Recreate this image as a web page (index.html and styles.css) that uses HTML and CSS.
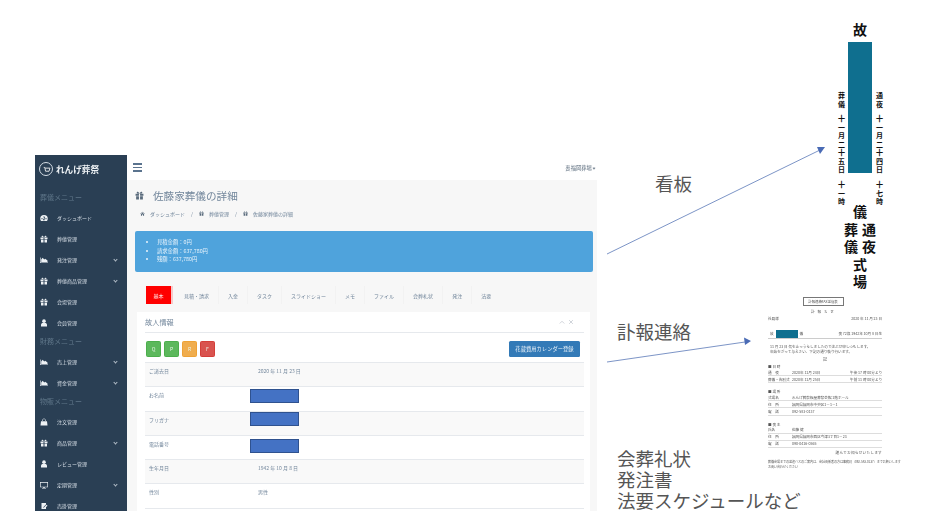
FILE: index.html
```html
<!DOCTYPE html>
<html lang="ja">
<head>
<meta charset="utf-8">
<title>れんげ葬祭</title>
<link rel="stylesheet" href="styles.css">
</head>
<body>
<svg class="sprites" width="0" height="0" aria-hidden="true">
  <symbol id="i-gift" viewBox="0 0 16 16"><path d="M1 5h6v3.500H1zM9 5h6v3.500H9zM2 9.500h5V15H2zM9 9.500h5V15H9zM8 4.600C6.400 1 3.200.3 3 2.600c-.1 1.600 2.500 2 5 2zm0 0C9.600 1 12.800.3 13 2.600c.1 1.600-2.500 2-5 2z"/></symbol>
  <symbol id="i-dash" viewBox="0 0 16 16"><path fill-rule="evenodd" d="M8 2a7.500 7.500 0 0 0-7.500 7.500c0 1.700.6 3.300 1.600 4.500h11.800a7.400 7.400 0 0 0 1.600-4.500A7.500 7.500 0 0 0 8 2zM4 10.500a1.200 1.200 0 1 1 0-2.400 1.200 1.200 0 0 1 0 2.400zm4-3.500a1.200 1.200 0 1 1 0-2.400A1.200 1.200 0 0 1 8 7zm0 6a1.800 1.800 0 0 1-.6-3.500l2-3.700 1 .5-1.600 3.600A1.800 1.800 0 0 1 8 13zm4-2.500a1.200 1.200 0 1 1 0-2.400 1.200 1.200 0 0 1 0 2.400z"/></symbol>
  <symbol id="i-chart" viewBox="0 0 16 16"><path d="M0 3h1.200v10H16v1.200H0zM2.400 12V7l3-3.500 3 3.500 2-1.500L15 9v3z"/></symbol>
  <symbol id="i-user" viewBox="0 0 16 16"><circle cx="8" cy="4.300" r="3.600"/><path d="M2 15v-3.500C2 9 4 8 5.500 8h5C12 8 14 9 14 11.500V15z"/></symbol>
  <symbol id="i-bag" viewBox="0 0 16 16"><path d="M2 6.500h12l1 8.500H1zM4.800 6V4a3.200 3.200 0 0 1 6.400 0v2H10V4a2 2 0 0 0-4 0v2z"/></symbol>
  <symbol id="i-desktop" viewBox="0 0 16 16"><path fill-rule="evenodd" d="M0 2h16v10.500H9.500V14H12v1H4v-1h2.500v-1.500H0zM1.300 3.300v8h13.400v-8z"/></symbol>
  <symbol id="i-edit" viewBox="0 0 16 16"><path d="M3 2h9v3L7 10v2h2l3-3v5H3zM13 5.500l2 2L9 13H7.500v-1.500z"/></symbol>
  <symbol id="i-home" viewBox="0 0 16 16"><path d="M8 2 .5 8.500l1 1L8 4l6.500 5.500 1-1zM3 10v5h3.500v-3.500h3V15H13v-5L8 5.700z"/></symbol>
</svg>

<main class="canvas">
  <section class="app">
    <nav class="sidebar">
      <div class="brand">
        <span class="brand-mark"><svg viewBox="0 0 16 16"><path d="M4 5h1.500l1.200 5.500h5L13 6H6M7 12.500h.1M11 12.500h.1" fill="none" stroke="currentColor" stroke-width="1.200"/></svg></span>
        <span class="brand-name">れんげ葬祭</span>
      </div>
      <div class="side-head">葬儀メニュー</div>
      <a class="side-item"><svg class="side-icon"><use href="#i-dash"/></svg><span>ダッシュボード</span></a>
      <a class="side-item"><svg class="side-icon"><use href="#i-gift"/></svg><span>葬儀管理</span></a>
      <a class="side-item"><svg class="side-icon"><use href="#i-chart"/></svg><span>発注管理</span><i class="chev"></i></a>
      <a class="side-item"><svg class="side-icon"><use href="#i-gift"/></svg><span>葬儀商品管理</span><i class="chev"></i></a>
      <a class="side-item"><svg class="side-icon"><use href="#i-gift"/></svg><span>会場管理</span></a>
      <a class="side-item"><svg class="side-icon"><use href="#i-user"/></svg><span>会員管理</span></a>
      <div class="side-head">財務メニュー</div>
      <a class="side-item"><svg class="side-icon"><use href="#i-chart"/></svg><span>売上管理</span><i class="chev"></i></a>
      <a class="side-item"><svg class="side-icon"><use href="#i-chart"/></svg><span>資金管理</span><i class="chev"></i></a>
      <div class="side-head">物販メニュー</div>
      <a class="side-item"><svg class="side-icon"><use href="#i-bag"/></svg><span>注文管理</span></a>
      <a class="side-item"><svg class="side-icon"><use href="#i-gift"/></svg><span>商品管理</span><i class="chev"></i></a>
      <a class="side-item"><svg class="side-icon"><use href="#i-user"/></svg><span>レビュー管理</span></a>
      <a class="side-item"><svg class="side-icon"><use href="#i-desktop"/></svg><span>定期管理</span><i class="chev"></i></a>
      <a class="side-item"><svg class="side-icon"><use href="#i-edit"/></svg><span>売掛管理</span></a>
    </nav>

    <div class="main">
      <header class="topbar">
        <span class="burger"><i></i><i></i><i></i></span>
        <span class="account">喪福岡葬場 <i class="chev small"></i></span>
      </header>
      <div class="content">
        <h1 class="page-title"><svg class="title-icon"><use href="#i-gift"/></svg>佐藤家葬儀の詳細</h1>
        <div class="crumbs">
          <svg class="crumb-icon"><use href="#i-home"/></svg><span>ダッシュボード</span><b>/</b>
          <svg class="crumb-icon"><use href="#i-gift"/></svg><span>葬儀管理</span><b>/</b>
          <svg class="crumb-icon"><use href="#i-gift"/></svg><span>佐藤家葬儀の詳細</span>
        </div>
        <ul class="alert">
          <li>見積金額：0円</li>
          <li>請求金額：637,780円</li>
          <li>残額：637,780円</li>
        </ul>
        <div class="tabs">
          <a class="tab active">基本</a>
          <a class="tab">見積・請求</a>
          <a class="tab">入金</a>
          <a class="tab">タスク</a>
          <a class="tab">スライドショー</a>
          <a class="tab">メモ</a>
          <a class="tab">ファイル</a>
          <a class="tab">会葬礼状</a>
          <a class="tab">発注</a>
          <a class="tab">法要</a>
        </div>
        <div class="card">
          <div class="card-head">
            <span>故人情報</span>
            <span class="card-tools">
              <svg class="tool" viewBox="0 0 8 8"><path d="M1 6l3-3 3 3" fill="none" stroke="currentColor"/></svg>
              <svg class="tool" viewBox="0 0 8 8"><path d="M1.500 1.500l5 5M6.500 1.500l-5 5" fill="none" stroke="currentColor"/></svg>
            </span>
          </div>
          <div class="actions">
            <a class="btn green">Q</a>
            <a class="btn green">P</a>
            <a class="btn orange">R</a>
            <a class="btn red">F</a>
            <a class="btn-blue">花蔵費用カレンダー登録</a>
          </div>
          <div class="rows">
            <div class="row"><span class="key">ご逝去日</span><span class="val">2020 年 11 月 23 日</span></div>
            <div class="row"><span class="key">お名前</span><span class="mask m-a"></span></div>
            <div class="row"><span class="key">フリガナ</span><span class="mask m-b"></span></div>
            <div class="row"><span class="key">電話番号</span><span class="mask m-c"></span></div>
            <div class="row"><span class="key">生年月日</span><span class="val">1942 年 10 月 8 日</span></div>
            <div class="row"><span class="key">性別</span><span class="val">男性</span></div>
          </div>
        </div>
      </div>
    </div>
  </section>

  <svg class="arrows" viewBox="0 0 941 520">
    <line x1="607" y1="254" x2="820" y2="150"/>
    <polygon points="825,147 817,147 820,154"/>
    <line x1="607" y1="362" x2="745" y2="342"/>
    <polygon points="751,341 744,337.500 745,345"/>
  </svg>

  <p class="note note-sign">看板</p>
  <p class="note note-notice">訃報連絡</p>
  <p class="note note-list">会葬礼状<br>発注書<br>法要スケジュールなど</p>

  <aside class="banner">
    <div class="banner-top">故</div>
    <div class="banner-mid">
      <div class="v-col"><span>葬儀</span><span>十一月二十五日</span><span>十一時</span></div>
      <div class="banner-bar"></div>
      <div class="v-col"><span>通夜</span><span>十一月二十四日</span><span>十七時</span></div>
    </div>
    <div class="banner-names">
      <div>儀</div>
      <div class="pair"><span>葬</span><span>通</span></div>
      <div class="pair"><span>儀</span><span>夜</span></div>
      <div>式</div>
      <div>場</div>
    </div>
  </aside>

  <article class="doc">
    <div class="doc-title">訃報連絡FAX送信表</div>
    <div class="doc-sub">訃 報 ち せ</div>
    <div class="doc-line spread"><span>社員様</span><span>2020 年 11 月 23 日</span></div>
    <div class="doc-name"><span>故</span><span class="doc-mask"></span><span>儀</span><span class="doc-right">喪 72歳 1942年 10月 8 日生</span></div>
    <p class="doc-body">11 月 23 日 気を止っうらしましたので注ぶせ申しつもします。<br>年始をざって与えさい、下記の通り執り行います。</p>
    <div class="doc-ki">記</div>
    <div class="doc-h">■ 日 時</div>
    <div class="doc-line rule"><span>通　夜</span><span>2020年 11月 24日</span><span class="time">午後 17 時 00分より</span></div>
    <div class="doc-line rule"><span>葬儀・告別式</span><span>2020年 11月 25日</span><span class="time">午前 11 時 00分より</span></div>
    <div class="doc-h gap">■ 場 所</div>
    <div class="doc-line rule"><span>式場名</span><span>れんげ葬祭板屋葬祭会館 1階ホール</span></div>
    <div class="doc-line rule"><span>住　所</span><span>福岡県福岡市中央区1－1－1</span></div>
    <div class="doc-line rule"><span>電　話</span><span>092-583-0137</span></div>
    <div class="doc-h gap">■ 喪 主</div>
    <div class="doc-line rule"><span>氏名</span><span>佐藤 健</span></div>
    <div class="doc-line rule"><span>住　所</span><span>福岡県福岡市西区今津3丁目1－23</span></div>
    <div class="doc-line rule"><span>電　話</span><span>090-0416-0565</span></div>
    <div class="doc-sign">謹んでお知らせいたします</div>
    <p class="doc-foot">葬儀会場までの送迎バスのご案内は、会社関係者の方は事務局（092-583-0137）までお願いします<br>お問い合わせください</p>
  </article>
</main>
</body>
</html>
```

FILE: styles.css
```css
* { box-sizing: border-box; }
html, body { margin: 0; padding: 0; background: #fff; overflow: hidden; }
body { font-family: "Noto Sans CJK JP", "Liberation Sans", sans-serif; }
.sprites { position: absolute; }
.canvas { position: relative; width: 941px; height: 520px; overflow: hidden; }

/* app screenshot placed on the slide */
.app {
  position: absolute; left: 35px; top: 155px; width: 562px; height: 356px;
  display: flex; overflow: hidden; background: #f7f7f7; color: #73879c;
  filter: blur(.35px);
}
.sidebar { width: 92px; flex: none; background: #2a3f54; color: #d5dde5; }
.brand { height: 34px; display: flex; align-items: center; padding: 0 0 6px 4px; }
.brand-mark {
  width: 14px; height: 14px; border: 1px solid #d5dde5; border-radius: 50%;
  display: flex; align-items: center; justify-content: center; color: #fff;
}
.brand-mark svg { width: 11px; height: 11px; }
.brand-name { margin-left: 3px; font-size: 8.600px; font-weight: 700; color: #eef2f5; white-space: nowrap; }
.side-head { height: 18px; line-height: 17px; padding-left: 5px; font-size: 7px; color: #5f7689; white-space: nowrap; }
.side-item { height: 21px; display: flex; align-items: center; padding-left: 5px; font-size: 5px; white-space: nowrap; }
.side-icon { width: 8px; height: 8px; fill: #eef2f5; margin-right: 9px; flex: none; }
.chev {
  display: block; width: 3px; height: 3px; border-right: 1px solid currentColor; border-bottom: 1px solid currentColor;
  transform: rotate(45deg); margin-left: auto; margin-right: 10px; margin-top: -1px; opacity: .8;
}
.chev.small { display: inline-block; width: 2px; height: 2px; margin: 0 0 1px 0; border-width: .6px; }

.main { flex: 1; min-width: 0; }
.topbar {
  height: 25px; background: #fff; display: flex; align-items: center; justify-content: space-between;
  padding: 0 2px 0 6px;
}
.burger { display: flex; flex-direction: column; gap: 2px; width: 9px; }
.burger i { display: block; height: 1.500px; background: #5a738e; }
.account { font-size: 5.300px; color: #5a6b7c; white-space: nowrap; }
.content { padding: 7px 4px 0 8px; }
.page-title { margin: 0; height: 16px; display: flex; align-items: center; font-size: 10.600px; font-weight: 400; color: #73879c; white-space: nowrap; }
.title-icon { width: 9px; height: 9px; fill: #5a6b7c; margin-right: 9px; flex: none; }
.crumbs { margin-top: 5px; margin-left: 5px; height: 10px; display: flex; align-items: center; font-size: 5px; white-space: nowrap; }
.crumb-icon { width: 5px; height: 5px; fill: #5a6b7c; margin-right: 5px; flex: none; }
.crumbs b { font-weight: 400; margin: 0 6px; }
.alert {
  margin: 13px 0 0; height: 41px; padding: 7px 0 0 22px; background: #4fa3dc; border-radius: 2px;
  color: #e8f3fb; font-size: 5.300px; line-height: 8.500px; list-style: disc;
}
.tabs { margin: 14px 0 0 11px; height: 18px; display: flex; }
.tab { display: flex; align-items: center; padding: 0 9px; font-size: 5px; color: #73879c; white-space: nowrap; border-right: 1px solid #f2f2f2; }
.tab.active { background: #f00; color: #fff; padding: 0 7.500px; margin-right: 4px; box-shadow: 2px 0 0 #f8c9c9; border: 0; }
.tab:last-child { border-right: 0; }
.card { margin: 8px 3px 0 2px; height: 200px; background: #fff; padding: 0 6px 0 8px; }
.card-head { height: 21px; display: flex; align-items: center; justify-content: space-between; border-bottom: 1px solid #e6e9ed; font-size: 7.200px; padding-right: 10px; }
.card-tools { display: flex; gap: 3px; color: #c0c6cd; }
.tool { width: 6px; height: 6px; }
.actions { height: 29px; display: flex; align-items: center; gap: 3px; padding: 2px 4px 0 1px; }
.btn { width: 15px; height: 16px; border-radius: 1.500px; display: flex; align-items: center; justify-content: center; font-size: 5px; color: #e9f5e9; }
.green { background: #5cb85c; border: 1px solid #4cae4c; }
.orange { background: #f0ad4e; border: 1px solid #eea236; }
.red { background: #d9534f; border: 1px solid #d43f3a; }
.btn-blue { margin-left: auto; width: 71px; height: 16px; border-radius: 1.500px; background: #337ab7; color: #e8f1f8; font-size: 5.300px; display: flex; align-items: center; justify-content: center; white-space: nowrap; }
.rows { border-top: 1px solid #e6e9ed; }
.row { height: 24.300px; border-bottom: 1px solid #e6e9ed; display: flex; padding: 4px 0 0 4px; font-size: 5px; line-height: 8px; position: relative; }
.row:nth-child(odd) { background: #f9f9f9; }
.key { width: 109px; flex: none; }
.mask { position: absolute; left: 105px; width: 49px; background: #4472c4; border: 1px solid #2f528f; }
.m-a { top: 2px; height: 14px; }
.m-b { top: 0; height: 14px; }
.m-c { top: 3px; height: 14px; }

/* slide annotations */
.arrows { position: absolute; left: 0; top: 0; width: 941px; height: 520px; }
.arrows line { stroke: #5b79b8; stroke-width: .8; }
.arrows polygon { fill: #4a6bb5; }
.note { position: absolute; margin: 0; font-size: 18.500px; line-height: 21px; color: #555; font-weight: 400; white-space: nowrap; }
.note-sign { left: 655px; top: 173px; }
.note-notice { left: 617px; top: 321px; }
.note-list { left: 617px; top: 448px; }

/* signboard */
.banner { position: absolute; left: 835px; top: 19px; width: 50px; color: #111; font-weight: 700; }
.banner-top { height: 23px; line-height: 20px; text-align: center; font-size: 14px; }
.banner-mid { display: flex; height: 163px; }
.banner-bar { width: 24px; height: 131px; background: #0f6f8f; margin: 0 1px; }
.v-col { flex: 1; display: flex; flex-direction: column; align-items: center; gap: 6px; padding-top: 50px; font-size: 7px; line-height: 9px; }
.v-col span { writing-mode: vertical-rl; text-orientation: upright; letter-spacing: 1.500px; white-space: nowrap; }
.banner-names { font-size: 14px; line-height: 17.500px; text-align: center; margin-top: -2px; }
.pair { display: flex; justify-content: center; gap: 4px; }

/* notice document */
.doc { position: absolute; left: 768px; top: 297px; width: 114px; font-size: 3.600px; line-height: 5px; color: #555; filter: blur(.2px); }
.doc-title { width: 41px; height: 9px; margin: 0 auto; border: 1px solid #777; font-size: 3.400px; line-height: 7px; text-align: center; white-space: nowrap; position: relative; left: -2px; }
.doc-sub { text-align: center; margin-top: 3px; letter-spacing: 1px; position: relative; left: -2px; }
.doc-line { display: flex; gap: 8px; height: 7.100px; align-items: center; white-space: nowrap; }
.doc-line.spread { justify-content: space-between; margin-top: 1px; }
.doc-line.rule { border-bottom: .5px solid #ddd; }
.doc-line.rule span:first-child { width: 16px; flex: none; }
.time { margin-left: auto; }
.doc-name { margin-top: 7px; height: 10px; display: flex; align-items: center; gap: 2px; border-bottom: 1.500px solid #ccc; padding-left: 2px; white-space: nowrap; }
.doc-mask { width: 22px; height: 8px; background: #0f6f8f; display: block; }
.doc-right { margin-left: auto; }
.doc-body { margin: 5px 0 0 0; padding-left: 2px; line-height: 5px; white-space: nowrap; }
.doc-ki { text-align: center; margin-top: 3px; font-size: 4px; height: 6px; }
.doc-h { margin-top: 1px; height: 5px; }
.doc-h.gap { margin-top: 6px; }
.doc-sign { text-align: right; margin-top: 2px; height: 6px; letter-spacing: .3px; white-space: nowrap; }
.doc-foot { margin: 4px 0 0; line-height: 5px; font-size: 3px; white-space: nowrap; }
```
